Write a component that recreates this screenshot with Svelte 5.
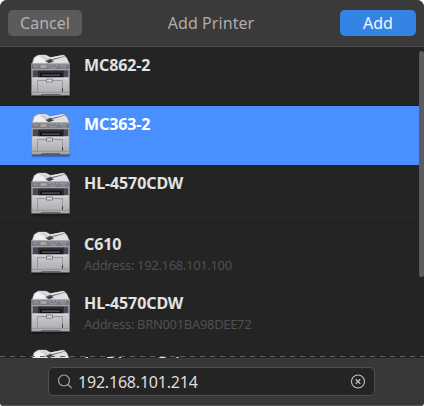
<script>
  const printers = [
    { name: 'MC862-2' },
    { name: 'MC363-2', selected: true },
    { name: 'HL-4570CDW' },
    { name: 'C610', address: '192.168.101.100' },
    { name: 'HL-4570CDW', address: 'BRN001BA98DEE72' },
    { name: 'JetDirect Printer' , clipped: true }
  ];
  let query = $state('192.168.101.214');
</script>

{#snippet printerIcon()}
  <svg class="printer" width="46" height="49" viewBox="0 0 46 48" preserveAspectRatio="none" aria-hidden="true">
    <defs>
      <linearGradient id="body" x1="0" y1="0" x2="0" y2="1">
        <stop offset="0" stop-color="#e2e2e6" />
        <stop offset="0.55" stop-color="#cfcfd3" />
        <stop offset="1" stop-color="#a9a9ad" />
      </linearGradient>
      <linearGradient id="shade" x1="0" y1="0" x2="0" y2="1">
        <stop offset="0" stop-color="#000" stop-opacity=".6" />
        <stop offset="1" stop-color="#000" stop-opacity="0" />
      </linearGradient>
    </defs>
    <path d="M3 41h39l-1 4H5z" fill="url(#shade)" />
    <path d="M3.500 12 6 4.500 10 2h8l5 2.500 13-2.500 2.500 2.500 3 6V41.500h-9V41H13v.500H3.500z" fill="url(#body)" stroke="#808085" stroke-width=".6" />
    <path d="M5 9.500 7 4.500 11 2.500h7l4 3-4 4z" fill="#f0f0f3" />
    <path d="M11 3.500 17 3l6 4-3 1z" fill="#cfcfd5" />
    <path d="m20 6 15-4 2 1.500-15 4z" fill="#66666d" />
    <path d="m22 4.500 13-2.500 2 1-14 3z" fill="#e9e9ed" />
    <path d="m25 8 11-3.500 3 1 1.500 4H24z" fill="#dedee3" />
    <path d="m17 7.500 6-1 3 1.500-5 2z" fill="#3f3f46" />
    <path d="M3.500 10h38v6.500h-38z" fill="#7b7c86" />
    <path d="M3.500 10h38v1h-38z" fill="#b5b6bd" />
    <path d="M6 13h4M21 12.500h2m1.500 0h2m1.500 0h2m2 0h6M22 14.500h6m6 0h3" stroke="#bec0c8" stroke-width=".8" stroke-dasharray="1.300 1" />
    <path d="M12.500 12h6v2.500h-6z" fill="#aeb29a" />
    <path d="M3.500 15.800h38v1.300h-38z" fill="#a4a4ac" />
    <path d="M4.500 17h36v7h-36z" fill="#484952" />
    <path d="M10 17.500h26v6.500H10z" fill="#2b2b31" />
    <path d="M12 19.500h22v4H12z" fill="#131317" />
    <path d="M14 21h18v1.200H14z" fill="#5c5c64" />
    <path d="M5 24h35v1H5z" fill="#e0e0e4" />
    <path d="M9.500 38V27h25v11" fill="none" stroke="#8a8a90" stroke-width=".8" />
    <path d="M18.500 25.500h6v3h-6z" fill="#d7d7dc" stroke="#707077" stroke-width=".8" />
    <path d="M34 34.500h1V38h-1z" fill="#3b3b40" />
    <path d="M4 38.500h37.500" stroke="#8b8b92" stroke-width=".8" />
    <path d="M14 40.500h18V42H14z" fill="#5c5c62" />
  </svg>
{/snippet}

<div class="window">
  <header>
    <button class="cancel">Cancel</button>
    <span class="title">Add Printer</span>
    <button class="add">Add</button>
  </header>

  <main>
    <ul>
      {#each printers as printer}
        <li class:selected={printer.selected}>
          {@render printerIcon()}
          <div class="info" class:detailed={printer.address} class:clipped={printer.clipped}>
            <strong>{printer.name}</strong>
            {#if printer.address}<span>Address: {printer.address}</span>{/if}
          </div>
        </li>
      {/each}
    </ul>
    <div class="undershoot"></div>
    <div class="thumb"></div>
  </main>

  <footer>
    <div class="search">
      <svg width="16" height="16" viewBox="0 0 16 16" fill="none" stroke="#b0b0af" stroke-width="1.100" aria-hidden="true">
        <circle cx="7" cy="6.500" r="5.500" />
        <path d="m11 10.500 3.700 3.700" />
      </svg>
      <input bind:value={query} aria-label="Search printers" />
      <svg width="16" height="16" viewBox="0 0 16 16" fill="none" stroke="#c0c0bf" stroke-width="1.100" aria-hidden="true">
        <circle cx="8" cy="7.500" r="6.500" />
        <path d="m5.700 5.200 4.600 4.600m0-4.600-4.600 4.600" stroke-width="1.300" />
      </svg>
    </div>
  </footer>
</div>

<style>
  :global(body) { margin: 0; background: #fff; overflow: hidden; }
  .window {
    box-sizing: border-box; width: 424px; height: 406px; overflow: hidden;
    display: flex; flex-direction: column;
    background: #383838; border-bottom: 1px solid #555;
    border-radius: 7px 7px 3px 3px;
    font: 16px/22px "Noto Sans", sans-serif;
  }
  header {
    box-sizing: border-box; height: 47px; flex: none;
    display: flex; justify-content: space-between; align-items: center;
    padding: 0 8px; background: #3a3a3a; border-bottom: 1px solid #4b4b4b;
  }
  .title { color: #afacaa; letter-spacing: .06px; }
  button {
    height: 26px; padding: 0; border: 0; border-radius: 5px;
    font: inherit; line-height: 26px;
  }
  .cancel { width: 74px; background: #5b5b5b; color: #b5b1b0; }
  .add { width: 76px; background: #3584e4; color: #f3f7fd; }
  main { position: relative; height: 311px; flex: none; overflow: hidden; background: #242424; }
  ul { margin: 0; padding: 0; list-style: none; }
  li {
    box-sizing: border-box; height: 59px; display: flex;
    padding: 5px 0 0 28px; border-bottom: 1px solid #1f1f1f;
  }
  .selected { background: #4a8fff; border-color: #4a8fff; }
  .printer { flex: none; margin-top: 1px; }
  .info { display: flex; flex-direction: column; padding: 2px 0 0 10px; color: #e2e2e2; }
  .detailed { padding-top: 4px; }
  .clipped { padding-top: 5px; }
  .clipped strong { letter-spacing: 0; }
  .selected .info { color: #fff; }
  strong { font-weight: 700; white-space: nowrap; letter-spacing: -.1px; }
  .info span { font-size: 13px; line-height: 20px; letter-spacing: -.33px; color: #505050; }
  .undershoot {
    position: absolute; left: 0; right: 0; bottom: 1px; height: 1px;
    background: repeating-linear-gradient(90deg, #606060 0 5px, transparent 5px 10px);
  }
  .thumb {
    position: absolute; right: 0; top: 4px; width: 5px; height: 226px;
    border-radius: 3px; background: #5c5c5c;
  }
  footer { flex: 1; display: flex; justify-content: center; align-items: flex-start; padding-top: 9px; }
  .search {
    box-sizing: border-box; width: 327px; height: 29px; margin-right: 1px;
    display: flex; align-items: center; padding: 0 8px;
    background: #242424; border: 1px solid #505050; border-radius: 5px;
  }
  input {
    flex: 1; min-width: 0; height: 25px; padding: 0 0 0 5px; border: 0; outline: 0;
    background: transparent; color: #dededd; font: inherit; letter-spacing: -.2px;
  }
</style>
